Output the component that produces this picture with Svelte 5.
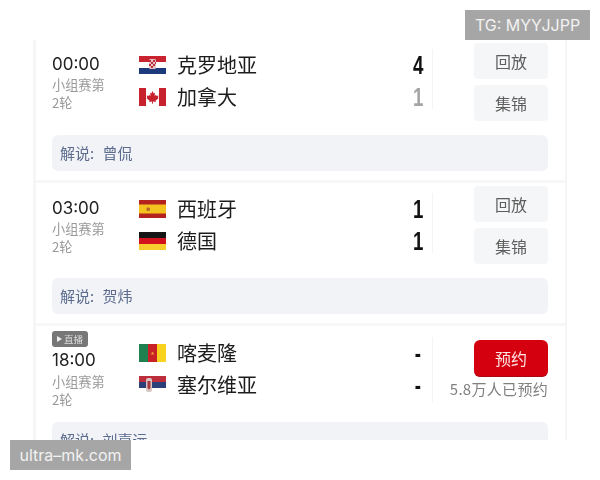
<script>
  const matches = [
    { time: '00:00', host: ['croatia', '克罗地亚', '4', false], away: ['canada', '加拿大', '1', true], who: '曾侃', done: true },
    { time: '03:00', host: ['spain', '西班牙', '1', false], away: ['germany', '德国', '1', false], who: '贺炜', done: true },
    { time: '18:00', host: ['cameroon', '喀麦隆', '-', false], away: ['serbia', '塞尔维亚', '-', false], who: '刘嘉远', done: false }
  ];
</script>

{#snippet flag(name)}
  <svg class="flag" viewBox="0 0 27 18" aria-hidden="true">
    {#if name === 'croatia'}
      <rect width="27" height="6" fill="#c8232f"/><rect y="6" width="27" height="6" fill="#fff"/><rect y="12" width="27" height="6" fill="#1d3a7c"/>
      <rect x="10" y="3" width="7" height="10" rx="1.5" fill="#e9c3c6"/>
      <path d="M10 4h2v2h-2zM14 4h2v2h-2zM12 6h2v2h-2zM16 6h1v2h-1zM10 8h2v2h-2zM14 8h2v2h-2zM12 10h2v2h-2z" fill="#b8313c"/>
    {:else if name === 'canada'}
      <rect width="27" height="18" fill="#fff"/><rect width="7" height="18" fill="#c8222e"/><rect x="20" width="7" height="18" fill="#c8222e"/>
      <path d="M13.500 3l1.300 2.400 1.200-.6-.4 3.200 1.500-1.300.4 1.200 2-.3-.6 2 .8.5-3.200 2.600.3 1.200-2.800-.4v2.300h-.9v-2.300l-2.800.4.3-1.200-3.200-2.600.8-.5-.6-2 2 .3.4-1.200 1.500 1.300-.4-3.200 1.200.6z" fill="#c8222e"/>
    {:else if name === 'spain'}
      <rect width="27" height="18" fill="#b5231f"/><rect y="4.500" width="27" height="9" fill="#f3c21f"/>
      <rect x="7.500" y="7.500" width="3.500" height="3.500" rx="1" fill="#b86a2a"/>
    {:else if name === 'germany'}
      <rect width="27" height="6" fill="#151515"/><rect y="6" width="27" height="6" fill="#d2121c"/><rect y="12" width="27" height="6" fill="#f8cd2e"/>
    {:else if name === 'cameroon'}
      <rect width="9" height="18" fill="#1f8050"/><rect x="9" width="9" height="18" fill="#c92128"/><rect x="18" width="9" height="18" fill="#f9d11f"/>
      <path d="M13.500 7.500l.5 1.200 1.300.1-1 .8.3 1.300-1.100-.7-1.100.7.3-1.300-1-.8 1.300-.1z" fill="#f0a92c"/>
    {:else}
      <rect width="27" height="6" fill="#bd2e3c"/><rect y="6" width="27" height="6" fill="#2b3f79"/><rect y="12" width="27" height="6" fill="#fff"/>
      <rect x="7" y="2" width="6" height="14" rx="2" fill="#d9c6c4"/>
      <path d="M8.500 5h3v7l-1.500 1.500-1.500-1.500z" fill="#a8383f"/>
    {/if}
  </svg>
{/snippet}

{#snippet team(t)}
  <div class="team">
    {@render flag(t[0])}
    <span class="name">{t[1]}</span>
    <span class="score" class:lost={t[3]}>{t[2]}</span>
  </div>
{/snippet}

<main class="page">
  <section class="card">
    {#each matches as m}
      <article class="match" class:upcoming={!m.done}>
        <div class="top">
          <div class="info">
            {#if !m.done}<div class="tag"><i></i>直播</div>{/if}
            <div class="time">{m.time}</div>
            <div class="round">小组赛第<br />2轮</div>
          </div>
          <div class="teams">
            {@render team(m.host)}
            {@render team(m.away)}
          </div>
          <div class="actions">
            {#if m.done}
              <button>回放</button>
              <button>集锦</button>
            {:else}
              <button class="book">预约</button>
              <div class="count">5.8万人已预约</div>
            {/if}
          </div>
        </div>
        <div class="commentary">解说: {m.who}</div>
      </article>
    {/each}
  </section>
  <div class="mark tg">TG: MYYJJPP</div>
  <div class="mark site">ultra–mk.com</div>
</main>

<style>
  :global(body) { background: #fff; }
  .page {
    position: relative;
    width: 600px;
    height: 480px;
    box-sizing: border-box;
    padding: 40px 0 0 33px;
    overflow: hidden;
    font-family: "Noto Sans CJK SC", sans-serif;
  }
  .card {
    width: 534px;
    height: 400px;
    box-sizing: border-box;
    border-left: 3px solid #f5f6f7;
    border-right: 2px solid #f5f6f7;
    overflow: hidden;
    filter: blur(0.4px);
  }
  .match {
    height: 143px;
    box-sizing: border-box;
    padding: 0 17px 0 16px;
    border-bottom: 3px solid #f7f7f8;
  }
  .top {
    display: flex;
    height: 95px;
  }
  .upcoming .top { height: 96px; }
  .info {
    width: 87px;
    padding-top: 13px;
    box-sizing: border-box;
  }
  .match:nth-child(2) .info { padding-top: 14px; }
  .upcoming .info { padding-top: 5px; }
  .tag {
    display: flex;
    align-items: center;
    gap: 2px;
    width: 36px;
    height: 16px;
    margin-bottom: 2px;
    padding-left: 5px;
    box-sizing: border-box;
    background: #777;
    border-radius: 3px;
    color: #ddd;
    font-size: 9.5px;
    line-height: 16px;
  }
  .tag i {
    width: 0;
    height: 0;
    border-left: 5px solid #eee;
    border-top: 3px solid transparent;
    border-bottom: 3px solid transparent;
  }
  .time {
    font-family: Inter, sans-serif;
    font-size: 17px;
    line-height: 22px;
    color: #222;
  }
  .round {
    margin-top: 1px;
    font-size: 13.2px;
    line-height: 18px;
    color: #9a9a9a;
  }
  .upcoming .round { margin-top: 2px; }
  .teams {
    width: 294px;
    height: 60px;
    margin-top: 9px;
    padding-right: 7px;
    box-sizing: border-box;
    border-right: 1px solid #f4f4f5;
    display: flex;
    flex-direction: column;
  }
  .match:nth-child(2) .teams { margin-top: 10px; }
  .upcoming .teams { margin-top: 11px; height: 66px; }
  .team {
    display: flex;
    align-items: center;
    height: 32px;
    flex: none;
  }
  .flag {
    width: 27px;
    height: 18px;
    flex: none;
  }
  .name {
    margin-left: 11px;
    font-size: 20px;
    line-height: 32px;
    color: #1c1c1c;
  }
  .score {
    margin-left: auto;
    width: 14px;
    text-align: center;
    font-family: "Liberation Sans", sans-serif;
    font-weight: 700;
    font-size: 26px;
    line-height: 32px;
    color: #111;
    transform: scaleX(0.72);
  }
  .score.lost { color: #a5a5a5; }
  .actions {
    width: 74px;
    margin-left: 41px;
    padding-top: 3px;
    display: flex;
    flex-direction: column;
    gap: 6px;
    flex: none;
  }
  .upcoming .actions { padding-top: 14px; gap: 2px; }
  button {
    height: 36px;
    padding: 0;
    border: 0;
    border-radius: 4px;
    background: #f5f6f7;
    color: #5e5e5e;
    font-family: inherit;
    font-size: 16px;
  }
  button.book {
    height: 37px;
    flex: none;
    border-radius: 6px;
    background: #d5000f;
    border-bottom: 1px solid #a80a14;
    color: #fbe6e6;
  }
  .count {
    margin-left: -26px;
    text-align: right;
    white-space: nowrap;
    font-size: 15px;
    letter-spacing: 0.3px;
    line-height: 20px;
    color: #808080;
  }
  .commentary {
    height: 36px;
    padding-left: 8px;
    border-radius: 6px;
    background: #f1f3f6;
    color: #5c6b8e;
    font-size: 15px;
    word-spacing: 5px;
    line-height: 36px;
  }
  .mark {
    position: absolute;
    height: 30px;
    background: #a6a6a6;
    color: #f2f2f2;
    font-family: Inter, sans-serif;
    line-height: 30px;
    text-align: center;
  }
  .tg {
    top: 10px;
    left: 465px;
    width: 125px;
    font-size: 16px;
  }
  .site {
    top: 440px;
    left: 10px;
    width: 121px;
    font-size: 16px;
  }
</style>
